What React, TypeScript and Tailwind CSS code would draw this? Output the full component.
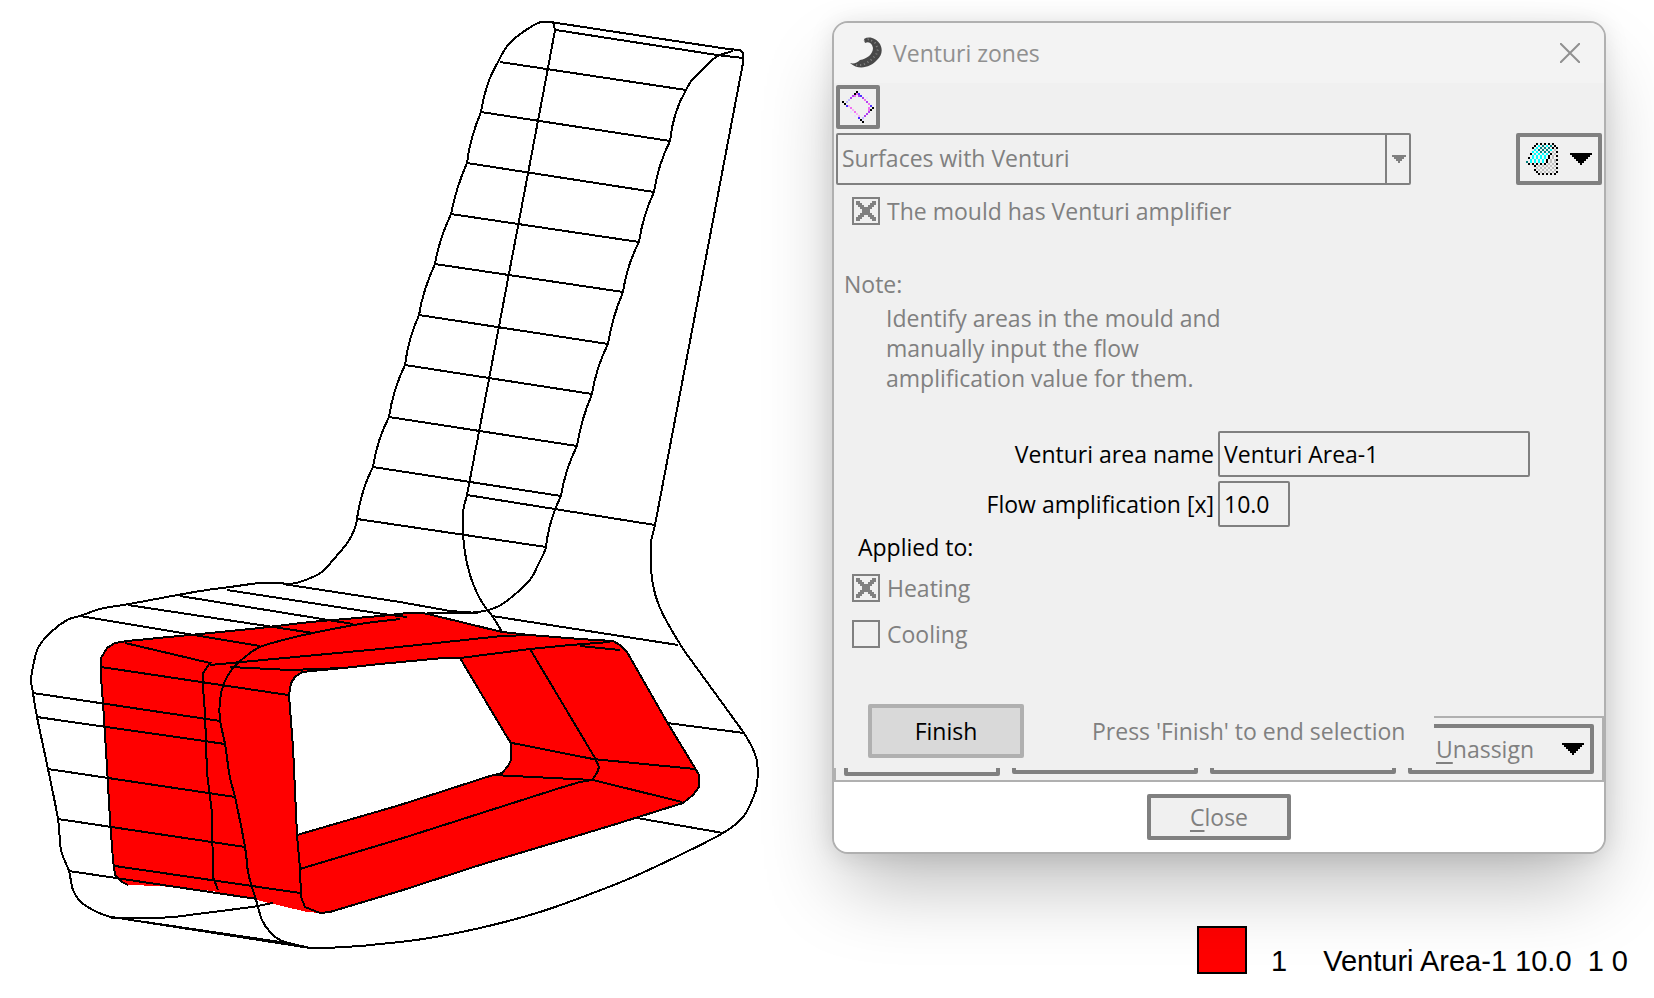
import { useState } from "react";

const PIXEL_COLORS: Record<string, string> = {
	k: "#000000",
	c: "#00ffff",
	t: "#008080",
	g: "#c0c0c0",
	b: "#4a30ff",
	p: "#b040f0",
	m: "#f070f0",
	l: "#c0b8ff",
	n: "#f8b0f8",
	w: "#e4e4fc",
};

const DIAMOND = [
	".......k........",
	"......kmb.......",
	".....pm.pb......",
	"....p.....p.w...",
	"...l.......m....",
	"k.l.........p...",
	".k...........m..",
	"..bn..........b.",
	"....m........m.k",
	".....n.......mk.",
	"....w.m......p..",
	".......n....p...",
	"......w.n..p....",
	"........b.l.....",
	".........kw.....",
	"..........k.....",
];

const SURFACE = [
	".....k.k.k.k.k..",
	"....k.c.t.c.t.k.",
	"...k.c.t.t.t.k.k",
	"....c.t.t.t.c.g.",
	"...c.c.t.t.t.g.k",
	"..k.c.c.c.c.k.g.",
	"...c.c.c.c.k.g.k",
	".k.c.c.c.c.k.g..",
	"..c.c.c.c.k.g.gk",
	"t.c.c.c.c.k.g.g.",
	".k.k.k.k.k.g.g.k",
	"....k.g.g.g.g.g.",
	".....g.g.g.g.g.k",
	"....k.g.g.g.g.g.",
	".....k.g.g.g.g.k",
	"......k.k.k.k.k.",
];

const RUNGS = [
	"M500 62L686 90",
	"M481 112L670 141",
	"M467 163L654 192",
	"M451 214L639 242",
	"M435 264L623 292",
	"M419 315L608 344",
	"M405 365L592 394",
	"M389 417L577 446",
	"M373 467L561 496",
	"M357 519L546 547",
	"M467 495L655 525",
	"M283 584L400 602L450 611L478 613",
	"M227 590L383 614L407 617",
	"M180 596L353 624",
	"M128 605L313 633",
	"M80 616L260 646",
	"M33 693L220 721",
	"M37 717L225 744",
	"M48 769L235 797",
	"M58 819L245 847",
	"M69 871L257 899",
	"M492 616L678 645",
	"M667 723L744 733",
	"M637 818L723 833",
];

const OUTLINES = [
	"M481 112Q470 138 467 163Q456 188 451 214Q439 240 435 264Q423 290 419 315Q408 340 405 365Q393 390 389 417Q377 440 373 467Q361 490 357 519",
	"M686 90Q673 112 670 141Q658 165 654 192Q643 215 639 242Q627 265 623 292Q612 318 608 344Q596 368 592 394Q581 420 577 446Q565 470 561 496Q549 520 546 547",
	"M557 23L728 49L740 50L743 53V63L655 525",
	"M556 30L717 55L743 58",
	"M553 22L555 30L548 68L467 495",
	"M683 649L744 733",
	"M112 917L310 948",
	"M145 922L287 943",
	"M113 918H157L174 917L252 907L273 903",
];

// point lists, joined by a smooth curve
const CURVES = [
	"557,23 541,22 523,32 508,45 499,60 490,78 484,97 481,112",
	"733,51 716,57 702,70 692,80 686,90",
	"357,519 355,528 348,542 333,560 322,572 303,581 290,584",
	"546,547 544,553 538,565 530,580 513,596 497,607 478,612 460,613 427,613",
	"467,495 463,512 463,533 465,553 470,575 477,593 485,607 493,617 502,632",
	"655,525 651,543 651,567 653,585 658,603 667,622 683,649",
	"290,584 277,583 260,583 230,587 207,590 183,594 140,602 123,605 100,609 80,616 67,620 50,633 38,648 33,667 31,680 33,693 37,717 48,769 58,819 61,850 69,871 73,890 82,903 97,912 113,918",
	"744,733 752,747 757,762 757,785 753,798 743,817 723,833 680,855 633,877 593,893 540,912 480,928 423,939 380,944 360,946 325,948 310,948",
	"400,619 360,624 313,633 287,639 260,647 245,657 233,668 224,683 220,700 220,720 225,744 230,778 235,797 245,847 248,872 252,887 257,903 262,920 270,932 280,940 293,944 310,948",
];

const INNER_LINES = [
	"M125 643L210 663L203 673V687L205 713L207 773L212 813L213 877L218 890",
	"M101 667L288 695",
	"M115 866L300 893",
	"M210 665L380 649L502 636L530 635",
	"M230 667L290 670L343 668",
	"M289 695L293 747L297 835L300 868L301 897L305 907L320 913",
	"M300 869L400 839L563 787L580 782L592 780L597 773L599 767L595 758L530 649",
	"M460 658L530 649L570 645L610 642",
	"M580 646L620 650",
	"M512 743L593 759L695 769",
	"M493 775L593 780L682 802",
];

const RED_EDGE =
	"M320 913L330 912L400 891L480 865L613 825L683 803L693 795L699 787V775L695 768L667 722L627 652L620 645L613 641L580 639L530 635L502 632L432 615L423 613H408L380 616L310 622L260 628L200 634L127 641L115 643L107 648L101 658V677L103 703L107 767L110 820L113 860L115 875L122 882L128 885";
const RED_HOLE =
	"M302 672L295 677L291 683L289 695L293 747L297 835L400 805L490 776L502 773L508 766L511 760V743L507 737L460 658H443L380 664L343 668Z";

const curve = (list: string) => {
	const pts = list.split(" ").map((p) => p.split(",").map(Number));
	let d = `M${pts[0][0]} ${pts[0][1]}`;
	for (let i = 0; i < pts.length - 1; i++) {
		const before = pts[i - 1] || pts[i];
		const from = pts[i];
		const to = pts[i + 1];
		const after = pts[i + 2] || to;
		d += `C${from[0] + (to[0] - before[0]) / 6} ${
			from[1] + (to[1] - before[1]) / 6
		} ${to[0] - (after[0] - from[0]) / 6} ${
			to[1] - (after[1] - from[1]) / 6
		} ${to[0]} ${to[1]}`;
	}
	return d;
};

const PixelIcon = ({ rows }: { rows: string[] }) => (
	<svg
		className="h-8 w-8"
		viewBox="0 0 16 16"
		shapeRendering="crispEdges"
		aria-hidden="true"
	>
		{rows.flatMap((row, y) =>
			row
				.split("")
				.map((cell, x) =>
					cell === "." ? null : (
						<rect
							key={`${x}-${y}`}
							x={x}
							y={y}
							width="1"
							height="1"
							fill={PIXEL_COLORS[cell]}
						/>
					)
				)
		)}
	</svg>
);

const Arrow = () => (
	<svg
		className="h-3 w-[22px]"
		viewBox="0 0 11 6"
		shapeRendering="crispEdges"
		aria-hidden="true"
	>
		<path d="M0 0H11V1H10V2H9V3H8V4H7V5H6V6H5V5H4V4H3V3H2V2H1V1H0Z" />
	</svg>
);

const Chair = () => (
	<svg
		className="h-auto w-full"
		viewBox="0 0 827 998"
		fill="none"
		stroke="#000"
		strokeWidth="2"
		shapeRendering="crispEdges"
		role="img"
		aria-label="Chair mould"
	>
		<path
			d={`${RED_EDGE}L160 886L213 891L257 900L307 912Z${RED_HOLE}`}
			fill="#ff0000"
			fillRule="evenodd"
			stroke="none"
		/>
		<path d={RED_EDGE} />
		<path d={RED_HOLE} />
		{[...RUNGS, ...OUTLINES, ...INNER_LINES, ...CURVES.map(curve)].map(
			(d) => (
				<path key={d} d={d} />
			)
		)}
	</svg>
);

interface TickProps {
	label: string;
	defaultChecked?: boolean;
}

const Tick = ({ label, defaultChecked = false }: TickProps) => (
	<label className="flex h-7 items-center gap-[7px] pl-4 text-[#808080]">
		<span className="grid">
			<input
				type="checkbox"
				className="peer col-start-1 row-start-1 h-7 w-7 appearance-none border-2 border-[#808080]"
				defaultChecked={defaultChecked}
				disabled
			/>
			<svg
				className="invisible col-start-1 row-start-1 m-1 h-5 w-5 peer-checked:visible"
				viewBox="0 0 10 10"
				fill="#808080"
				shapeRendering="crispEdges"
				aria-hidden="true"
			>
				<path d="M0 0H2V1H3V2H4V3H6V2H7V1H8V0H10V2H9V3H8V4H7V6H8V7H9V8H10V10H8V9H7V8H6V7H4V8H3V9H2V10H0V8H1V7H2V6H3V4H2V3H1V2H0Z" />
			</svg>
		</span>
		{label}
	</label>
);

const VenturiDialog = () => {
	const [areaName, setAreaName] = useState("Venturi Area-1");
	const [amplification, setAmplification] = useState("10.0");

	return (
		<section className="relative z-10 overflow-hidden rounded-2xl border-2 border-[#b0b0b0] bg-[#f0f0f0] shadow-[0_40px_80px_-12px_rgba(0,0,0,0.28),0_2px_24px_rgba(0,0,0,0.1)]">
			<header className="flex h-[60px] items-center bg-[#f3f3f3] pl-4">
				<svg className="h-8 w-8" viewBox="0 0 32 32" aria-hidden="true">
					<path
						d="M14 2C19-1 26 1 30 7C33 13 32 18 27 23C21 30 9 34 0 26C4 27 7 26 10 23C17 22 23 17 23 11C22 6 19 4 15 6Z"
						fill="#484848"
					/>
					<path
						d="M14 4L19 2L25 6L28 12L26 18L20 24L13 28L5 28"
						fill="none"
						stroke="#858585"
						strokeWidth="2"
						strokeDasharray="1 3"
					/>
				</svg>
				<h1 className="ml-[11px] text-[#909090]">Venturi zones</h1>
				<button
					type="button"
					className="mr-6 ml-auto"
					aria-label="Close window"
				>
					<svg
						className="h-5 w-5"
						viewBox="0 0 20 20"
						stroke="#909090"
						strokeWidth="2"
						aria-hidden="true"
					>
						<path d="M0 0L20 20M20 0L0 20" />
					</svg>
				</button>
			</header>

			<div className="px-[2px] pt-[2px]">
				<button
					type="button"
					className="flex h-11 w-11 items-center justify-center rounded-[2px] border-4 border-[#808080]"
					aria-label="Select surfaces"
				>
					<PixelIcon rows={DIAMOND} />
				</button>
				<div className="mt-1 flex h-[52px] justify-between">
					<div className="relative w-3/4">
						<select
							className="h-full w-full appearance-none rounded-[2px] border-2 border-[#808080] bg-transparent pb-[2px] pl-1 text-[#808080] opacity-100"
							aria-label="Venturi type"
							disabled
						>
							<option>Surfaces with Venturi</option>
						</select>
						<span className="pointer-events-none absolute inset-y-0 right-0 flex w-[26px] items-center justify-center border-l-2 border-[#808080]">
							<svg
								className="h-2 w-[14px]"
								viewBox="0 0 7 4"
								fill="#808080"
								shapeRendering="crispEdges"
								aria-hidden="true"
							>
								<path d="M0 0H7V1H6V2H5V3H4V4H3V3H2V2H1V1H0Z" />
							</svg>
						</span>
					</div>
					<button
						type="button"
						className="flex w-[86px] items-center justify-between rounded-[2px] border-4 border-[#808080] px-[6px]"
						aria-label="Surface display"
					>
						<PixelIcon rows={SURFACE} />
						<Arrow />
					</button>
				</div>

				<div className="mt-3">
					<Tick label="The mould has Venturi amplifier" defaultChecked />
				</div>

				<p className="mt-11 pl-2 text-[#808080]">Note:</p>
				<p className="mt-1 w-[400px] pl-[50px] text-[#808080]">
					Identify areas in the mould and manually input the flow
					amplification value for them.
				</p>

				<div className="mt-[38px] grid grid-cols-[378px_1fr] items-center gap-x-1 gap-y-1">
					<label htmlFor="area-name" className="text-right">
						Venturi area name
					</label>
					<input
						id="area-name"
						className="h-[46px] w-[312px] rounded-[2px] border-2 border-[#808080] pl-1"
						value={areaName}
						onChange={(e) => setAreaName(e.target.value)}
					/>
					<label htmlFor="amplification" className="text-right">
						Flow amplification [x]
					</label>
					<input
						id="amplification"
						className="h-[46px] w-[72px] rounded-[2px] border-2 border-[#808080] pl-1"
						value={amplification}
						onChange={(e) => setAmplification(e.target.value)}
					/>
				</div>

				<p className="mt-[5px] pl-[22px]">Applied to:</p>
				<div className="mt-3 flex flex-col gap-[18px]">
					<Tick label="Heating" defaultChecked />
					<Tick label="Cooling" />
				</div>
			</div>

			<div className="relative mt-[68px] grid h-[66px] grid-cols-[156px_1fr_1fr_1fr] items-start gap-3 border-2 border-[#b0b0b0] px-2 pt-[6px]">
				<div className="h-[52px] rounded-[2px] border-4 border-[#808080]" />
				<div className="h-[50px] rounded-[2px] border-4 border-[#808080]" />
				<div className="h-[50px] rounded-[2px] border-4 border-[#808080]" />
				<button
					type="button"
					className="flex h-[50px] items-center justify-between rounded-[2px] border-4 border-[#808080] pr-[6px] pl-6 text-[#808080]"
				>
					<span>
						<span className="underline underline-offset-4">U</span>
						nassign
					</span>
					<Arrow />
				</button>
				{/* selection prompt, covers the assign buttons */}
				<div className="absolute bottom-3 -left-[2px] flex h-[66px] w-[600px] items-start bg-[#f0f0f0] pt-[2px] pl-[34px]">
					<button
						type="button"
						className="h-[54px] w-[156px] rounded-[2px] border-4 border-[#b0b0b0] bg-[#d9d9d9]"
					>
						Finish
					</button>
					<p className="ml-[68px] leading-[54px] whitespace-nowrap text-[#808080]">
						Press 'Finish' to end selection
					</p>
				</div>
			</div>

			<footer className="flex justify-center bg-white py-3">
				<button
					type="button"
					className="h-[46px] w-36 rounded-[2px] border-4 border-[#808080] bg-[#f0f0f0] text-[#808080]"
				>
					<span className="underline underline-offset-4">C</span>lose
				</button>
			</footer>
		</section>
	);
};

export default function App() {
	return (
		<main className="flex min-h-screen items-start overflow-hidden bg-white font-['Open_Sans',sans-serif] text-[23px] leading-[30px] text-black">
			<div className="w-1/2">
				<Chair />
			</div>
			<div className="w-1/2 pt-[21px] pr-12 pl-[5px]">
				<VenturiDialog />
				<div className="mt-[72px] -mr-[22px] flex items-end justify-end font-['Liberation_Sans',sans-serif] text-[29px] leading-[26px]">
					<span className="h-12 w-[50px] border-2 border-black bg-[#ff0000]" />
					<span className="ml-6">1</span>
					<span className="ml-9 whitespace-pre">
						Venturi Area-1 10.0{"  "}1 0
					</span>
				</div>
			</div>
		</main>
	);
}
